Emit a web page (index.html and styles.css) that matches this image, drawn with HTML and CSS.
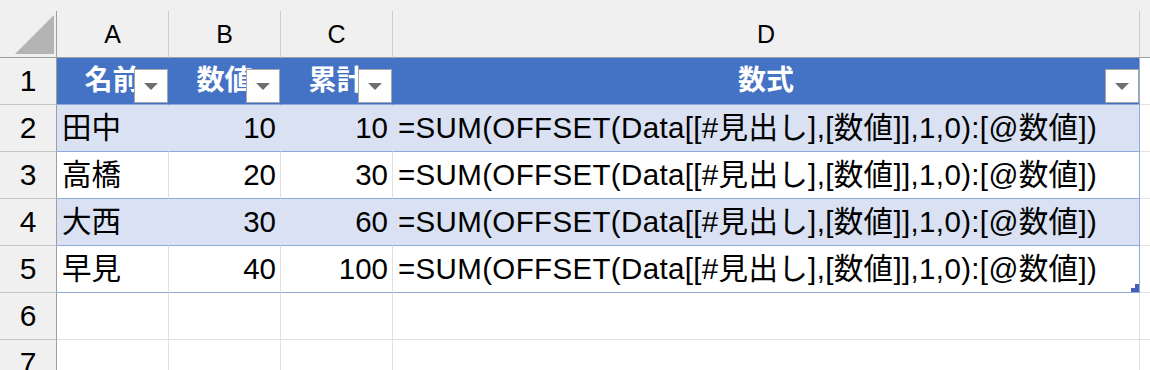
FILE: index.html
```html
<!DOCTYPE html>
<html lang="ja">
<head>
<meta charset="utf-8">
<link rel="stylesheet" href="styles.css">
</head>
<body>
<div class="sheet">
  <div class="strip"></div>

  <div class="corner"><span class="tri"></span></div>
  <div class="colhead">A</div>
  <div class="colhead">B</div>
  <div class="colhead">C</div>
  <div class="colhead">D</div>
  <div class="colhead edge"></div>

  <div class="rowhead">1</div>
  <div class="cell th">名前<span class="filter"></span></div>
  <div class="cell th">数値<span class="filter"></span></div>
  <div class="cell th">累計<span class="filter"></span></div>
  <div class="cell th last">数式<span class="filter"></span></div>
  <div class="cell tail"></div>

  <div class="rowhead">2</div>
  <div class="cell band">田中</div>
  <div class="cell band num">10</div>
  <div class="cell band num">10</div>
  <div class="cell band last formula">=SUM(OFFSET(Data[[#見出し],[数値]],1,0):[@数値])</div>
  <div class="cell tail"></div>

  <div class="rowhead">3</div>
  <div class="cell plain">高橋</div>
  <div class="cell plain num">20</div>
  <div class="cell plain num">30</div>
  <div class="cell plain last formula">=SUM(OFFSET(Data[[#見出し],[数値]],1,0):[@数値])</div>
  <div class="cell tail"></div>

  <div class="rowhead">4</div>
  <div class="cell band">大西</div>
  <div class="cell band num">30</div>
  <div class="cell band num">60</div>
  <div class="cell band last formula">=SUM(OFFSET(Data[[#見出し],[数値]],1,0):[@数値])</div>
  <div class="cell tail"></div>

  <div class="rowhead">5</div>
  <div class="cell plain">早見</div>
  <div class="cell plain num">40</div>
  <div class="cell plain num">100</div>
  <div class="cell plain last formula">=SUM(OFFSET(Data[[#見出し],[数値]],1,0):[@数値])<svg class="handle" width="8" height="8" viewBox="0 0 8 8"><polygon points="4,0 8,0 8,8 0,8 0,4 4,4" fill="#4a5fb8"/></svg></div>
  <div class="cell tail"></div>

  <div class="rowhead">6</div>
  <div class="cell"></div>
  <div class="cell"></div>
  <div class="cell"></div>
  <div class="cell"></div>
  <div class="cell tail"></div>

  <div class="rowhead">7</div>
  <div class="cell"></div>
  <div class="cell"></div>
  <div class="cell"></div>
  <div class="cell"></div>
  <div class="cell tail"></div>
</div>
</body>
</html>
```

FILE: styles.css
```css
html, body {
  margin: 0;
  padding: 0;
  background: #ffffff;
  overflow: hidden;
}

.sheet {
  display: grid;
  grid-template-columns: 57px 112px 112px 112px 747px 1fr;
  grid-template-rows: 11px repeat(8, 47px);
  width: 1150px;
  font-family: "Liberation Sans", "Noto Sans CJK JP", sans-serif;
  color: #000;
}

.sheet > div {
  box-sizing: border-box;
}

.strip {
  grid-column: 1 / -1;
  background: #f0f0f0;
}

.corner {
  background: #f0f0f0;
  border-right: 1px solid #9e9e9e;
  border-bottom: 1px solid #9e9e9e;
  display: flex;
  align-items: flex-end;
  justify-content: flex-end;
  padding: 0 2px 3px 0;
}

.tri {
  width: 0;
  height: 0;
  border-left: 39px solid transparent;
  border-bottom: 39px solid #b4b4b4;
}

.colhead {
  background: #f0f0f0;
  border-right: 1px solid #cdcdcd;
  border-bottom: 1px solid #9e9e9e;
  display: flex;
  align-items: center;
  justify-content: center;
  font-size: 25px;
  line-height: 1;
}

.colhead.edge {
  border-right: none;
}

.rowhead {
  background: #f0f0f0;
  border-right: 1px solid #9e9e9e;
  border-bottom: 1px solid #c6c6c6;
  display: flex;
  align-items: center;
  justify-content: center;
  font-size: 30px;
  line-height: 1;
}

.cell {
  position: relative;
  background: #fff;
  border-right: 1px solid #e1e1e1;
  border-bottom: 1px solid #e1e1e1;
  display: flex;
  align-items: center;
  padding: 0 4px 0 5px;
  font-size: 29.5px;
  line-height: 1;
  white-space: nowrap;
}

.cell.num {
  justify-content: flex-end;
}

.cell.formula {
  letter-spacing: 0.35px;
}

.cell.th {
  background: #4472c4;
  border-right-color: #4472c4;
  border-bottom-color: #8ea9db;
  color: #fff;
  font-weight: bold;
  font-size: 28px;
  justify-content: center;
  padding: 0;
}

.cell.band {
  background: #d9e1f2;
  border-right-color: #d9e1f2;
  border-bottom-color: #8ea9db;
}

.cell.plain {
  border-bottom-color: #8ea9db;
}

.cell.last {
  border-right-color: #8ea9db;
}

.cell.tail {
  border-right: none;
  padding: 0;
}

.filter {
  position: absolute;
  right: 0;
  bottom: 1px;
  width: 34px;
  height: 34px;
  box-sizing: border-box;
  background: #fff;
  border: 1px solid #a6a6a6;
  display: flex;
  align-items: center;
  justify-content: center;
}

.filter::after {
  content: "";
  width: 0;
  height: 0;
  border-left: 7px solid transparent;
  border-right: 7px solid transparent;
  border-top: 7px solid #6f6f6f;
  margin-top: 1px;
}

.handle {
  position: absolute;
  right: 0;
  bottom: 0;
}
```
